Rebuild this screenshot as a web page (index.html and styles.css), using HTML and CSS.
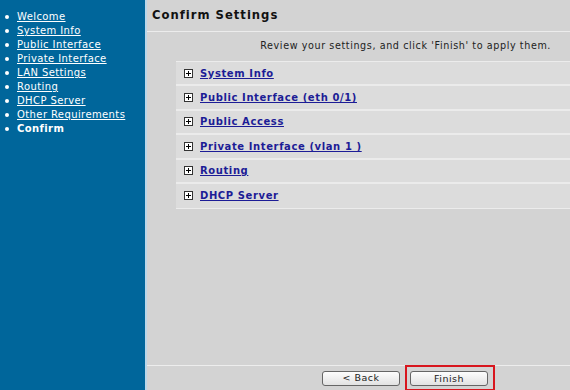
FILE: index.html
```html
<!DOCTYPE html>
<html lang="en">
<head>
  <meta charset="UTF-8">
  <title>Confirm Settings</title>
  <link rel="stylesheet" href="styles.css">
</head>
<body>
  <div class="wizard">
    <ul class="steps">
      <li><a href="#">Welcome</a></li>
      <li><a href="#">System Info</a></li>
      <li><a href="#">Public Interface</a></li>
      <li><a href="#">Private Interface</a></li>
      <li><a href="#">LAN Settings</a></li>
      <li><a href="#">Routing</a></li>
      <li><a href="#">DHCP Server</a></li>
      <li><a href="#">Other Requirements</a></li>
      <li class="current">Confirm</li>
    </ul>

    <div class="main">
      <div class="title">Confirm Settings</div>
      <div class="intro">Review your settings, and click 'Finish' to apply them.</div>

      <div class="summary">
        <div class="row"><span class="toggle"></span><a href="#">System Info</a></div>
        <div class="row"><span class="toggle"></span><a href="#">Public Interface (eth 0/1)</a></div>
        <div class="row"><span class="toggle"></span><a href="#">Public Access</a></div>
        <div class="row"><span class="toggle"></span><a href="#">Private Interface (vlan 1 )</a></div>
        <div class="row"><span class="toggle"></span><a href="#">Routing</a></div>
        <div class="row"><span class="toggle"></span><a href="#">DHCP Server</a></div>
      </div>

      <div class="footer">
        <button class="btn">&lt; Back</button>
        <span class="highlight"><button class="btn">Finish</button></span>
      </div>
    </div>
  </div>
</body>
</html>
```

FILE: styles.css
```css
body {
  margin: 0;
  font-family: 'DejaVu Sans', Verdana, sans-serif;
  background: #d3d3d3;
}
.wizard {
  display: flex;
  height: 390px;
}
.steps {
  width: 147px;
  margin: 0;
  padding: 10px 0 0 5px;
  list-style: none;
  background: #00669b;
  border-right: 2px solid #b9d7ea;
  box-sizing: border-box;
  flex-shrink: 0;
}
.steps li {
  font-size: 10px;
  line-height: 14px;
  letter-spacing: 0.4px;
  color: #fff;
  display: flex;
  align-items: center;
}
.steps li::before {
  content: "";
  width: 4px;
  height: 4px;
  border-radius: 50%;
  background: #fff;
  margin-right: 8px;
}
.steps a {
  color: #fff;
}
.steps .current {
  font-weight: bold;
}
.main {
  flex: 1;
  display: flex;
  flex-direction: column;
  min-width: 0;
}
.title {
  height: 31px;
  line-height: 31px;
  padding-left: 5px;
  font-size: 11.6px;
  font-weight: bold;
  letter-spacing: 1px;
  color: #111;
  border-bottom: 1px solid #ececec;
}
.intro {
  text-align: right;
  padding: 8px 19px 0 0;
  height: 21px;
  font-size: 9.6px;
  letter-spacing: 0.6px;
  color: #222;
}
.summary {
  margin-left: 29px;
  border-top: 1px solid #ececec;
  border-bottom: 1px solid #ececec;
}
.row {
  display: flex;
  align-items: center;
  height: 22.4px;
  padding-left: 8px;
  background: #dcdcdc;
  border-bottom: 2px solid #ebebeb;
}
.row:last-child {
  border-bottom: 0;
  height: 24px;
}
.row a {
  font-size: 10px;
  font-weight: bold;
  letter-spacing: 0.6px;
  color: #1c1c96;
}
.toggle {
  position: relative;
  width: 7px;
  height: 7px;
  border: 1px solid #333;
  background: #fff;
  margin-right: 7px;
}
.toggle::before,
.toggle::after {
  content: "";
  position: absolute;
  background: #000;
}
.toggle::before {
  left: 1px;
  top: 3px;
  width: 5px;
  height: 1px;
}
.toggle::after {
  left: 3px;
  top: 1px;
  width: 1px;
  height: 5px;
}
.footer {
  margin-top: auto;
  height: 24px;
  border-top: 1px solid #ededed;
  display: flex;
  align-items: center;
  padding-left: 175px;
  gap: 5px;
}
.btn {
  width: 78px;
  height: 15px;
  padding: 0;
  font-family: 'DejaVu Sans', Verdana, sans-serif;
  font-size: 9.5px;
  line-height: 12px;
  letter-spacing: 0.5px;
  color: #222;
  border: 1px solid #666;
  border-radius: 3px;
  background: linear-gradient(#fdfdfd, #e2e2e2);
}
.highlight {
  border: 2px solid #d8161e;
  padding: 4px 5px 3px 3px;
  display: flex;
}
```
